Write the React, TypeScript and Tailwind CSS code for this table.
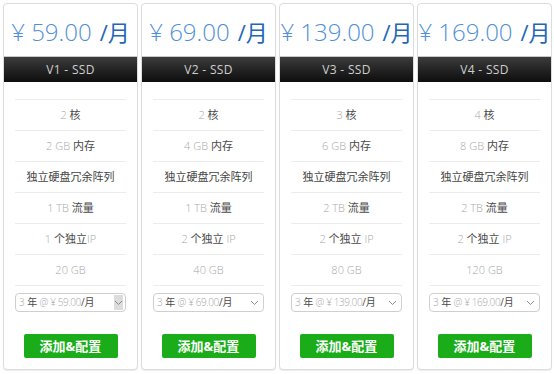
import React from "react";

type Plan = {
  name: string;
  price: string;
  cores: string;
  ram: string;
  traffic: string;
  ips: string;
  ipSpace: boolean;
  disk: string;
  nativeArrow: boolean;
};

const plans: Plan[] = [
  { name: "V1 - SSD", price: "59.00", cores: "2", ram: "2 GB", traffic: "1 TB", ips: "1", ipSpace: false, disk: "20 GB", nativeArrow: true },
  { name: "V2 - SSD", price: "69.00", cores: "2", ram: "4 GB", traffic: "1 TB", ips: "2", ipSpace: true, disk: "40 GB", nativeArrow: false },
  { name: "V3 - SSD", price: "139.00", cores: "3", ram: "6 GB", traffic: "2 TB", ips: "2", ipSpace: true, disk: "80 GB", nativeArrow: false },
  { name: "V4 - SSD", price: "169.00", cores: "4", ram: "8 GB", traffic: "2 TB", ips: "2", ipSpace: true, disk: "120 GB", nativeArrow: false },
];

const Light = ({ children }: { children: React.ReactNode }) => (
  <span className="text-[#a8a8a8] font-light">{children}</span>
);
const Dark = ({ children }: { children: React.ReactNode }) => (
  <span className="text-[#4a4a4a]">{children}</span>
);

function Row({ children }: { children: React.ReactNode }) {
  return (
    <div className="h-[31px] border-t border-[#ececec] flex items-center justify-center text-[11px]">
      {children}
    </div>
  );
}

function Chevron() {
  return (
    <svg width="9" height="6" viewBox="0 0 9 6" fill="none">
      <path d="M1 1l3.5 3.5L8 1" stroke="#8a8a8a" strokeWidth="1" />
    </svg>
  );
}

function Card({ plan }: { plan: Plan }) {
  return (
    <div className="w-[135px] h-[367px] shrink-0 border border-[#dcdcdc] rounded-[4px] bg-white flex flex-col shadow-[0_1px_1px_rgba(0,0,0,0.08)] overflow-hidden">
      <div className="h-[52px] flex items-center justify-center whitespace-nowrap pt-[4px]">
        <span className="text-[#4f8fd8] text-[24px] font-light leading-none">¥&nbsp;{plan.price}</span>
        <span className="text-[#2466b6] text-[22px] leading-none ml-[8px] font-normal">/月</span>
      </div>
      <div className="h-[26px] border-t border-[#c8c8c8] bg-gradient-to-b from-[#3c3c3c] to-[#0e0e0e] flex items-center justify-center">
        <span className="text-[#cfcfcf] text-[12px] tracking-[0.3px]">{plan.name}</span>
      </div>
      <div className="pt-[17px] px-[11px]">
        <div className="border-b border-[#ececec]">
          <Row>
            <Light>{plan.cores}</Light>
            <Dark>&nbsp;核</Dark>
          </Row>
          <Row>
            <Light>{plan.ram}&nbsp;</Light>
            <Dark>内存</Dark>
          </Row>
          <Row>
            <span className="text-[#444]">独立硬盘冗余阵列</span>
          </Row>
          <Row>
            <Light>{plan.traffic}&nbsp;</Light>
            <Dark>流量</Dark>
          </Row>
          <Row>
            <Light>{plan.ips}&nbsp;</Light>
            <Dark>个独立</Dark>
            <Light>{plan.ipSpace ? "\u00a0IP" : "IP"}</Light>
          </Row>
          <Row>
            <Light>{plan.disk}</Light>
          </Row>
        </div>
      </div>
      <div className="px-[11px] mt-[7px]">
        <div className="h-[19px] border border-[#cfcfcf] rounded-[4px] flex items-center pl-[3px] pr-[2px] text-[10px] whitespace-nowrap">
          <Light>3&nbsp;</Light>
          <Dark>年</Dark>
          <span className="text-[#a8a8a8] font-light tracking-[-0.4px]">&nbsp;@ ¥ {plan.price}</span>
          <Dark>/月</Dark>
          <div className="flex-1" />
          {plan.nativeArrow ? (
            <div className="w-[9px] h-[15px] bg-[#dcdcdc] flex items-center justify-center">
              <Chevron />
            </div>
          ) : (
            <div className="w-[10px] flex items-center justify-center mr-[2px]">
              <Chevron />
            </div>
          )}
        </div>
      </div>
      <div className="flex justify-center mt-[22px]">
        <button className="w-[94px] h-[24px] bg-[#1aad19] rounded-[2px] text-white text-[13px] font-bold flex items-center justify-center leading-none">
          添加&amp;配置
        </button>
      </div>
    </div>
  );
}

export default function App() {
  return (
    <div className="w-[554px] h-[374px] bg-white flex gap-[3px] pl-[3px] pt-[3px] font-['Open_Sans','Noto_Sans_CJK_SC',sans-serif]">
      {plans.map((p) => (
        <Card key={p.name} plan={p} />
      ))}
    </div>
  );
}
